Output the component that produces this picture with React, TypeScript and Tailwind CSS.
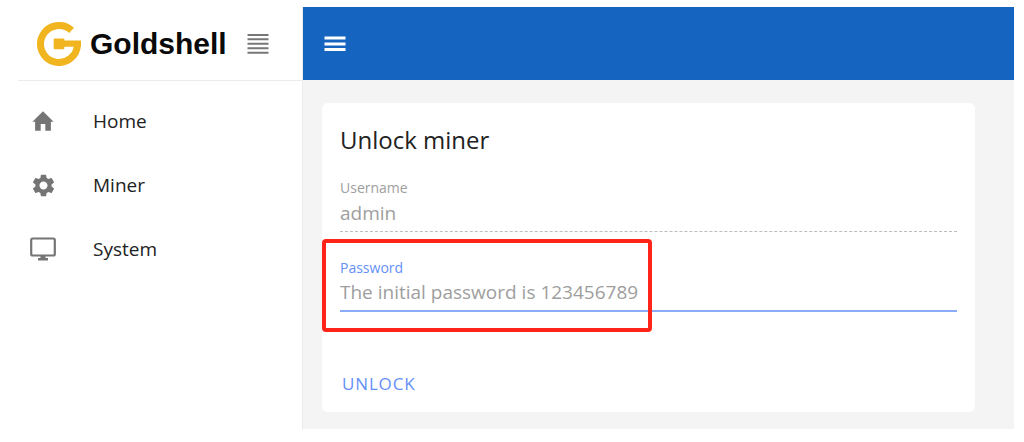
import { MdSettings } from "react-icons/md";

function HomeIcon({ className }: { className?: string }) {
  return (
    <svg viewBox="0 0 22 20" className={className} aria-hidden="true">
      <path d="M11 .3 21.6 10.8h-2.7V19.7h-5.6v-6.6H8.7v6.6H3.1v-8.9H.4z" fill="currentColor" />
    </svg>
  );
}

function MonitorIcon({ className }: { className?: string }) {
  return (
    <svg viewBox="0 0 26 24" className={className} aria-hidden="true">
      <rect x="1.2" y="1.5" width="23.6" height="17" rx="1.5" fill="none" stroke="currentColor" strokeWidth="2.2" />
      <path d="M10.5 18h5v3h2.5v2.5H8V21h2.5z" fill="currentColor" />
    </svg>
  );
}

function MenuIcon() {
  return (
    <svg viewBox="0 0 22 16" className="h-4 w-[22px]" aria-hidden="true">
      <path d="M.5 2h21M.5 8h21M.5 13.5h21" stroke="currentColor" strokeWidth="2.8" />
    </svg>
  );
}

function LogoMark() {
  return (
    <svg viewBox="0 0 44 44" className="h-11 w-11 shrink-0" aria-hidden="true">
      <path d="M34.6 8.4A18.5 18.5 0 1 0 40.5 22" fill="none" stroke="#f0b51f" strokeWidth="7" />
      <path d="M25 18.4h19v3.8l-.4 2.6H25z" fill="#f0b51f" />
      <rect x="16.7" y="16.4" width="10.6" height="10.8" rx="1" fill="#f0b51f" />
    </svg>
  );
}

function ListIcon() {
  return (
    <svg viewBox="0 0 22 22" className="h-[22px] w-[22px]" aria-hidden="true">
      <path
        d="M.5 2h21M.5 6.3h21M.5 10.7h21M.5 15.2h21M.5 19.8h21"
        stroke="#777777"
        strokeWidth="2"
      />
    </svg>
  );
}

const navItems = [
  { title: "Home", url: "#home", icon: HomeIcon, size: "h-5 w-[22px]" },
  { title: "Miner", url: "#miner", icon: MdSettings, size: "h-[27px] w-[27px]" },
  { title: "System", url: "#system", icon: MonitorIcon, size: "h-6 w-[26px]" },
];

function Sidebar() {
  return (
    <aside className="flex w-[285px] shrink-0 flex-col border-r border-[#ebebeb]">
      <div className="flex h-[74px] items-center border-b border-[#ebebeb] pl-[19px]">
        <LogoMark />
        <span className="ml-[9px] font-['Liberation_Sans',sans-serif] text-[30px] font-bold text-[#0a0a0a]">
          Goldshell
        </span>
        <button type="button" aria-label="Toggle sidebar" className="ml-5">
          <ListIcon />
        </button>
      </div>

      <nav className="flex flex-col py-2">
        {navItems.map((item) => (
          <a key={item.url} href={item.url} className="flex h-16 items-center text-[19px] text-[#222222]">
            <span className="flex w-[50px] justify-center text-[#757575]">
              <item.icon className={item.size} />
            </span>
            <span className="ml-[25px]">{item.title}</span>
          </a>
        ))}
      </nav>
    </aside>
  );
}

function UnlockCard() {
  return (
    <form
      className="rounded-md bg-white px-[18px] pt-[19px] pb-2"
      onSubmit={(e) => e.preventDefault()}
    >
      <h1 className="text-2xl leading-9 text-[#222222]">Unlock miner</h1>

      <div className="mt-5 flex flex-col">
        <label htmlFor="username" className="text-[14px] leading-5 text-[#9e9e9e]">
          Username
        </label>
        <input
          id="username"
          defaultValue="admin"
          readOnly
          className="h-[34px] w-full border-b border-dashed border-[#bdbdbd] pb-1 text-[19px] text-[#9e9e9e] outline-none"
        />
      </div>

      <div className="relative mt-[26px] flex flex-col">
        <label htmlFor="password" className="text-[14px] leading-5 text-[#6690f8]">
          Password
        </label>
        <input
          id="password"
          type="text"
          placeholder="The initial password is 123456789"
          className="h-[34px] w-full border-b-2 border-[#8aacfb] pb-1 text-[19px] outline-none placeholder:text-[#9e9e9e]"
        />
        {/* highlight around the password hint */}
        <div className="pointer-events-none absolute -top-[19px] -left-[18px] h-[93px] w-[330px] rounded border-4 border-[#ff2419]" />
      </div>

      <button type="submit" className="mt-[52px] h-10 px-0.5 text-[17px] tracking-wider text-[#6690f8]">
        UNLOCK
      </button>
    </form>
  );
}

export default function App() {
  return (
    <div className="flex min-h-screen bg-white pt-[7px] pr-[10px] pb-[13px] pl-[18px] font-['Open_Sans',sans-serif]">
      <Sidebar />
      <div className="flex min-w-0 flex-1 flex-col bg-[#f4f4f4]">
        <header className="flex h-[73px] items-center bg-[#1565c0] px-[21px]">
          <button type="button" aria-label="Open menu" className="text-white">
            <MenuIcon />
          </button>
        </header>
        <main className="pt-[23px] pr-[39px] pb-4 pl-[19px]">
          <UnlockCard />
        </main>
      </div>
    </div>
  );
}
